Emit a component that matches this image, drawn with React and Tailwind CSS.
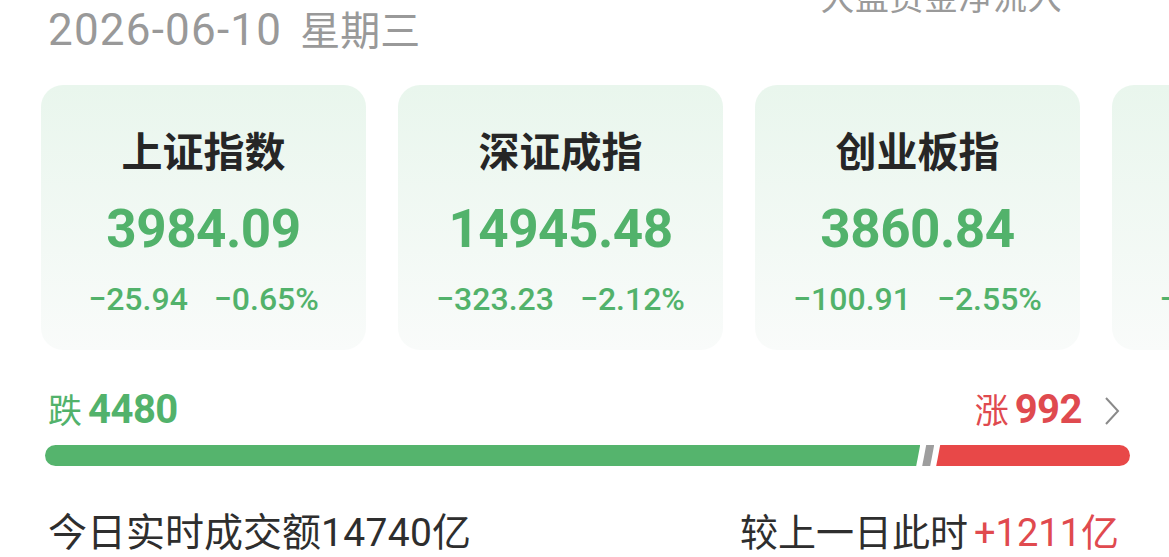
import React from 'react';

const indices = [
  { name: '上证指数', value: '3984.09', change: '−25.94', pct: '−0.65%' },
  { name: '深证成指', value: '14945.48', change: '−323.23', pct: '−2.12%' },
  { name: '创业板指', value: '3860.84', change: '−100.91', pct: '−2.55%' },
  { name: '科创50', value: '1283.17', change: '−41.62', pct: '−3.14%' },
];

const IndexCard = ({ item }) => (
  <div className="w-[325px] h-[265px] shrink-0 rounded-[22px] bg-gradient-to-b from-[#e9f6ed] to-[#f9fbfa] flex flex-col items-center pt-[42px]">
    <div className="text-[41px] leading-[52px] font-bold text-[#262626]">{item.name}</div>
    <div className="mt-[20px] text-[53px] leading-[60px] font-bold text-[#52b26b] tracking-[-0.5px]">{item.value}</div>
    <div className="mt-[22px] flex gap-[26px] text-[32px] leading-[36px] font-medium text-[#52b26b]">
      <span>{item.change}</span>
      <span>{item.pct}</span>
    </div>
  </div>
);

export default function App() {
  return (
    <div
      className="w-[1169px] h-[557px] overflow-hidden bg-white"
      style={{ fontFamily: 'Roboto, "Noto Sans CJK SC", sans-serif' }}
    >
      <div className="h-[56px] flex justify-between items-start pl-[48px] pr-[107px]">
        <div className="pt-[5px] flex items-baseline text-[#999999]">
          <span className="text-[44px] leading-[50px] tracking-[1.2px]">2026-06-10</span>
          <span className="ml-[18px] text-[40px] leading-[50px]">星期三</span>
        </div>
        <div className="-mt-[22px] text-[34px] leading-[40px] text-[#9a9a9a] tracking-[0.5px]">大盘资金净流入</div>
      </div>

      <div className="mt-[29px] flex gap-[32px] pl-[41px]">
        {indices.map((item) => (
          <IndexCard key={item.name} item={item} />
        ))}
      </div>

      <div className="mt-[40px] pl-[45px] pr-[39px]">
        <div className="flex items-end justify-between">
          <div className="flex items-baseline gap-[6px] pl-[3px] text-[#52b26b]">
            <span className="text-[34px] leading-[40px]">跌</span>
            <span className="text-[40px] leading-[40px] font-bold tracking-[-0.5px]">4480</span>
          </div>
          <div className="flex items-center gap-[22px] pr-[10px]">
            <div className="flex items-baseline gap-[6px] text-[#df4a4f]">
              <span className="text-[34px] leading-[40px]">涨</span>
              <span className="text-[40px] leading-[40px] font-bold tracking-[-0.5px]">992</span>
            </div>
            <svg width="16" height="30" viewBox="0 0 16 30" fill="none">
              <path d="M2 2 L14 15 L2 28" stroke="#8a8a8a" strokeWidth="2" />
            </svg>
          </div>
        </div>

        <div className="mt-[14px] flex h-[21px] gap-[2px]">
          <div className="flex-[4480] bg-[#55b46d] rounded-l-full [clip-path:polygon(0_0,100%_0,calc(100%-4px)_100%,0_100%)]" />
          <div className="w-[12px] bg-[#9e9e9e] [clip-path:polygon(4px_0,100%_0,calc(100%-4px)_100%,0_100%)]" />
          <div className="flex-[992] bg-[#e84848] rounded-r-full [clip-path:polygon(4px_0,100%_0,100%_100%,0_100%)]" />
        </div>
      </div>

      <div className="mt-[44px] flex justify-between items-center pl-[48px] pr-[50px] leading-[46px] text-[#2e2e2e]">
        <div className="text-[39px]">
          今日实时成交额<span className="tracking-[0.3px]">14740</span>亿
        </div>
        <div className="text-[38px]">
          较上一日此时<span className="ml-[6px] text-[#e04a4f]">+1211亿</span>
        </div>
      </div>
    </div>
  );
}
